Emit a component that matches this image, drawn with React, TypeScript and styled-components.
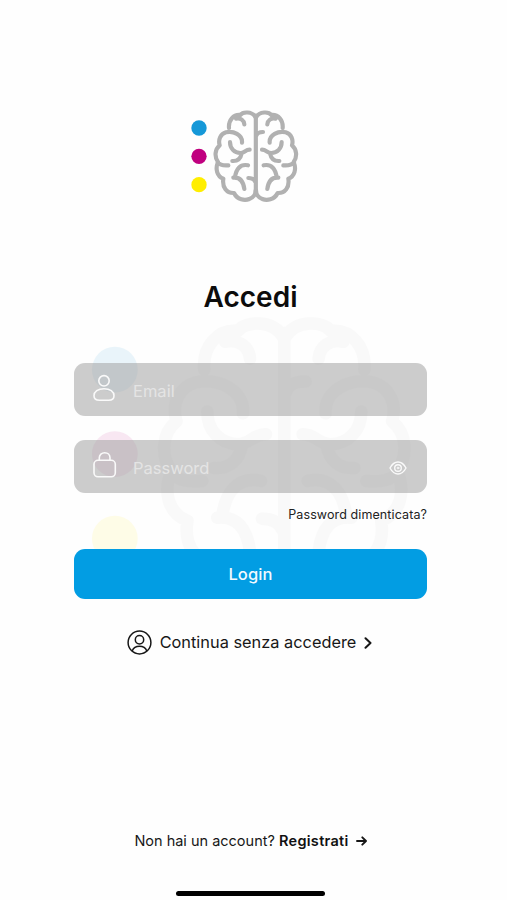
import React from "react";
import styled, { createGlobalStyle } from "styled-components";

const GlobalStyle = createGlobalStyle`
  * { box-sizing: border-box; }
  body { margin: 0; background: #fff; }
  button, input { font: inherit; border: 0; background: none; padding: 0; }
`;

const Screen = styled.main`
  position: relative;
  width: 507px;
  height: 900px;
  overflow: hidden;
  padding: 108px 80px 0 74px;
  display: flex;
  flex-direction: column;
  align-items: center;
  background: #fefefe;
  color: #171717;
  font-family: Inter, "Liberation Sans", sans-serif;
`;

const LogoSvg = styled.svg<{ $w: number }>`
  display: block;
  flex: none;
  width: ${(p) => p.$w}px;
  height: ${(p) => (p.$w * 290) / 330}px;
`;

const Watermark = styled.div`
  position: absolute;
  left: 87.5px;
  top: 310px;
  opacity: 0.085;
  g { opacity: 0.7; }
`;

const LogoSlot = styled.div`
  margin-right: 11px;
`;

const Title = styled.h1`
  margin: 75.3px 0 0;
  height: 34px;
  font-size: 28px;
  line-height: 34px;
  font-weight: 600;
  color: #0c0c0c;
`;

const Form = styled.form`
  position: relative;
  width: 353px;
  margin-top: 49px;
  display: flex;
  flex-direction: column;
`;

const Field = styled.label<{ $gap?: number }>`
  height: 53.5px;
  margin-top: ${(p) => p.$gap ?? 0}px;
  padding: 0 20px 0 19px;
  display: flex;
  align-items: center;
  border-radius: 11px;
  background: rgba(160, 160, 160, 0.54);
  color: #fafafa;
`;

const Input = styled.input`
  flex: 1;
  min-width: 0;
  padding-top: 3px;
  outline: none;
  font-size: 16.5px;
  line-height: 24px;
  &::placeholder { color: #e4e4e4; opacity: 1; }
`;

const IconCell = styled.span`
  flex: none;
  width: 40px;
`;

const Icon = styled.svg<{ $w: number; $h: number; $drop?: number }>`
  display: block;
  flex: none;
  width: ${(p) => p.$w}px;
  height: ${(p) => p.$h}px;
  margin-top: ${(p) => p.$drop ?? 0}px;
  fill: none;
  stroke: currentColor;
  stroke-linecap: round;
  stroke-linejoin: round;
`;

const Forgot = styled.a`
  align-self: flex-end;
  margin-top: 12.7px;
  height: 18px;
  font-size: 12.5px;
  line-height: 18px;
  letter-spacing: 0.1px;
  color: #222;
`;

const LoginButton = styled.button`
  height: 49.5px;
  margin-top: 25.3px;
  border-radius: 11px;
  background: #029de3;
  color: #f2faff;
  font-size: 16.5px;
  font-weight: 500;
  letter-spacing: 0.1px;
`;

const Guest = styled.a`
  margin-top: 31.5px;
  margin-left: -2px;
  height: 24px;
  display: flex;
  align-items: center;
  font-size: 16.35px;
  line-height: 24px;
`;

const GuestText = styled.span`
  margin: 0 8px;
`;

const Register = styled.p`
  margin: 176.3px 0 0;
  height: 20px;
  display: flex;
  align-items: center;
  font-size: 14.5px;
  line-height: 20px;
  white-space: pre;
`;

const Strong = styled.strong`
  font-weight: 600;
  margin-right: 7px;
  color: #111;
  letter-spacing: 0.3px;
`;

const HomeBar = styled.div`
  flex: none;
  width: 149px;
  height: 5px;
  margin-top: 40px;
  border-radius: 3px;
  background: #000;
`;

const HALF =
  "M227 53C216 34 188 36 181 46C160 44 145 62 147 85" +
  "M168 57C182 54 192 62 193 74" +
  "M186 129C188 105 160 93 138 98C121 103 114 120 119 137C104 149 103 172 114 187C105 208 111 230 130 237C126 263 140 281 162 280C172 301 195 304 208 298C220 294 227 283 227 272" +
  "M150 127C150 146 163 160 181 160C193 160 196 150 209 150" +
  "M157 184C173 185 182 176 185 161" +
  "M113 188C120 197 131 198 145 197" +
  "M204 197C180 192 168 209 165 233" +
  "M160 234C180 232 190 245 193 268";

function Logo({ width }: { width: number }) {
  return (
    <LogoSvg $w={width} viewBox="30 25 330 290" aria-hidden="true">
      <circle cx="57" cy="85" r="23" fill="#1598d8" />
      <circle cx="57" cy="170" r="23" fill="#c0007f" />
      <circle cx="57" cy="255" r="23" fill="#ffee00" />
      <g fill="none" stroke="#b1b1b1" strokeWidth="12.5" strokeLinecap="round" strokeLinejoin="round">
        <path d={HALF} />
        <path d={HALF} transform="translate(455 0) scale(-1 1)" />
        <path d="M227.500 48V280M229 108C232 99 239 97 249 97M205 235C216 235 223 239 226 247" />
      </g>
    </LogoSvg>
  );
}

export default function App() {
  return (
    <>
      <GlobalStyle />
      <Screen>
        <Watermark>
          <Logo width={328} />
        </Watermark>
        <LogoSlot>
          <Logo width={110} />
        </LogoSlot>
        <Title>Accedi</Title>
        <Form>
          <Field>
            <IconCell>
              <Icon $w={22} $h={28} $drop={-3} viewBox="0 0 22 28" strokeWidth="1.6">
                <circle cx="11" cy="6.800" r="5.200" />
                <path d="M11 14.700C5 14.700 1 17.700 1 21.700C1 25 3.500 26.300 6.500 26.300H15.500C18.500 26.300 21 25 21 21.700C21 17.700 17 14.700 11 14.700Z" />
              </Icon>
            </IconCell>
            <Input placeholder="Email" />
          </Field>
          <Field $gap={23.5}>
            <IconCell>
              <Icon $w={24} $h={28} $drop={-3} viewBox="0 0 24 28" strokeWidth="1.6">
                <rect x="1" y="9.300" width="21.300" height="16.500" rx="4" />
                <path d="M6.300 9V6.800C6.300 3.800 8.700 1.700 11.700 1.700S17 3.800 17 6.800V9" />
              </Icon>
            </IconCell>
            <Input placeholder="Password" />
            <Icon $w={18} $h={16} $drop={2} viewBox="0 0 18 16" strokeWidth="1.4">
              <path d="M1 8C3 4.300 5.700 2 9 2S15 4.300 17 8C15 11.700 12.300 14 9 14S3 11.700 1 8Z" />
              <circle cx="9" cy="8" r="3.300" />
              <circle cx="9" cy="8" r="0.900" strokeWidth="1" />
            </Icon>
          </Field>
          <Forgot>Password dimenticata?</Forgot>
          <LoginButton type="button">Login</LoginButton>
        </Form>
        <Guest>
          <Icon $w={25} $h={25} viewBox="0 0 25 25" strokeWidth="1.5">
            <circle cx="12.500" cy="12.500" r="11.400" />
            <circle cx="12.500" cy="9.700" r="4.200" />
            <path d="M5.300 20.800C6.500 17.500 9 16.200 12.500 16.200S18.500 17.500 19.700 20.800" />
          </Icon>
          <GuestText>Continua senza accedere</GuestText>
          <Icon $w={8} $h={12} $drop={2} viewBox="0 0 8 12" strokeWidth="2">
            <path d="M1.500 1.300L6.500 6L1.500 10.700" />
          </Icon>
        </Guest>
        <Register>
          Non hai un account? <Strong>Registrati</Strong>
          <Icon $w={11} $h={10} viewBox="0 0 11 10" strokeWidth="1.9">
            <path d="M1 5H9.800M6.300 1.300L10 5L6.300 8.700" />
          </Icon>
        </Register>
        <HomeBar />
      </Screen>
    </>
  );
}
